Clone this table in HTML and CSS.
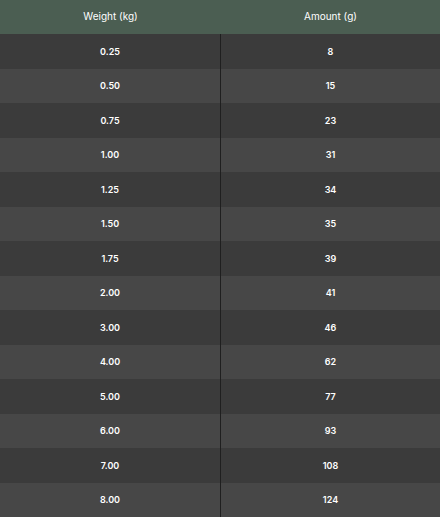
FILE: index.html
```html
<!DOCTYPE html>
<html>
<head>
<meta charset="utf-8">
<link rel="stylesheet" href="styles.css">
</head>
<body>
<div class="table">
  <div class="th">Weight (kg)</div><div class="th">Amount (g)</div>
  <div class="td l">0.25</div><div class="td">8</div>
  <div class="td l">0.50</div><div class="td">15</div>
  <div class="td l">0.75</div><div class="td">23</div>
  <div class="td l">1.00</div><div class="td">31</div>
  <div class="td l">1.25</div><div class="td">34</div>
  <div class="td l">1.50</div><div class="td">35</div>
  <div class="td l">1.75</div><div class="td">39</div>
  <div class="td l">2.00</div><div class="td">41</div>
  <div class="td l">3.00</div><div class="td">46</div>
  <div class="td l">4.00</div><div class="td">62</div>
  <div class="td l">5.00</div><div class="td">77</div>
  <div class="td l">6.00</div><div class="td">93</div>
  <div class="td l">7.00</div><div class="td">108</div>
  <div class="td l">8.00</div><div class="td">124</div>
</div>
</body>
</html>
```
FILE: styles.css
```css
html, body { margin: 0; padding: 0; background: #3b3b3b; }
.table {
  display: grid;
  grid-template-columns: 221px 219px;
  grid-template-rows: 34px repeat(14, 1fr);
  height: 517px;
  width: 440px;
  font-family: Inter, "Noto Sans", sans-serif;
  color: #ffffff;
}
.th {
  background: #4b5e52;
  font-size: 10px;
  font-weight: 400;
  display: flex;
  align-items: center;
  justify-content: center;
  padding-bottom: 3px;
  box-sizing: border-box;
}
.td {
  font-size: 9px;
  font-weight: 600;
  display: flex;
  align-items: center;
  justify-content: center;
  background: #3b3b3b;
}
.td.l { border-right: 1px solid #1f1f1f; }
.td:nth-child(4n+1), .td:nth-child(4n+2) { background: #474747; }
```
